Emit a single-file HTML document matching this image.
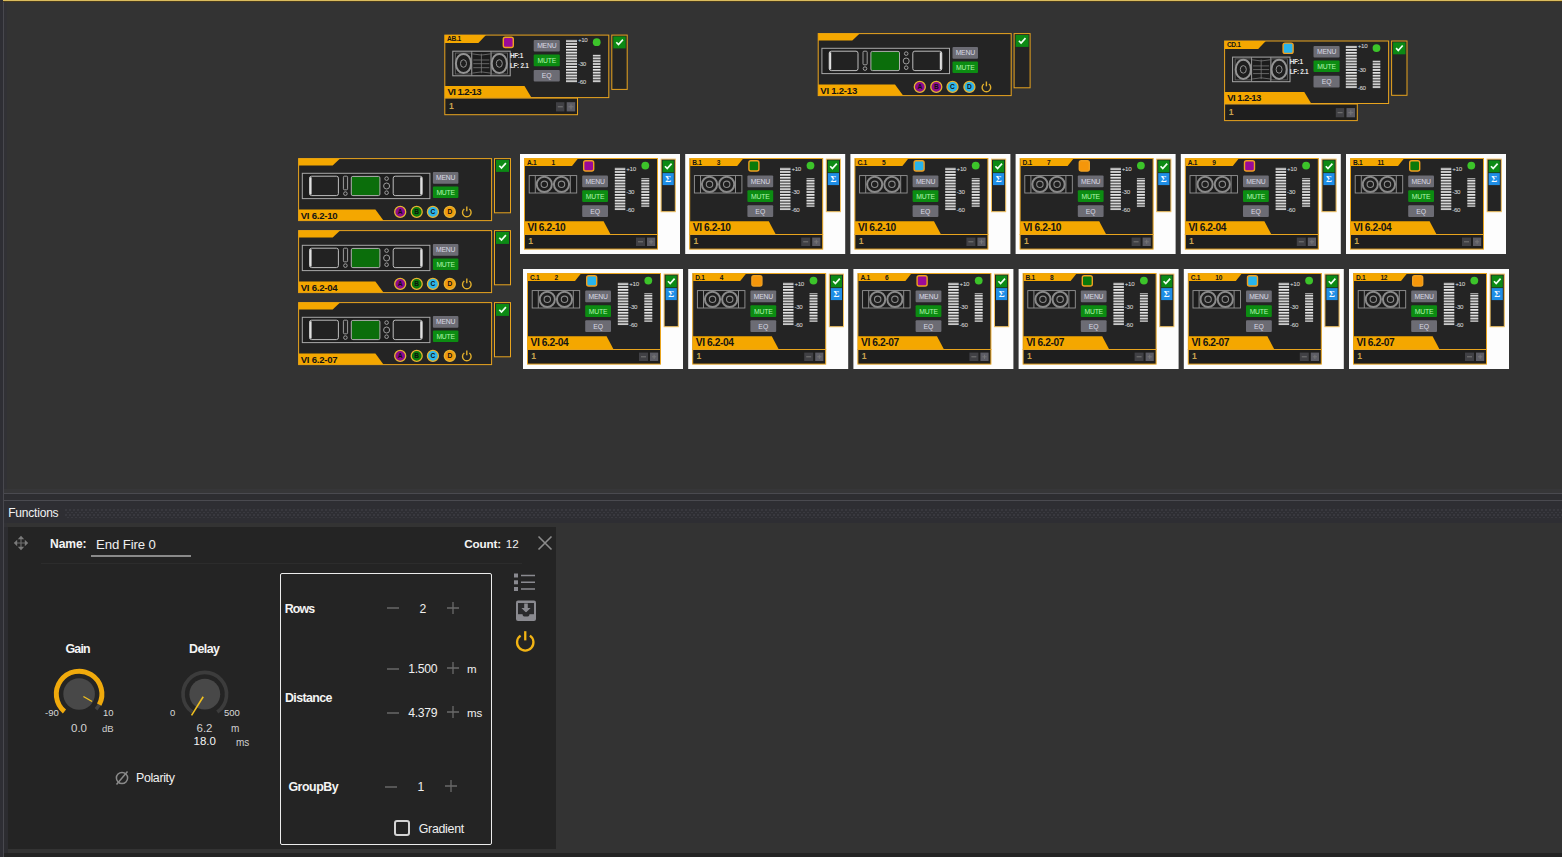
<!DOCTYPE html><html><head><meta charset="utf-8"><style>
*{margin:0;padding:0;box-sizing:border-box}
html,body{width:1562px;height:857px;overflow:hidden;background:#333333;font-family:"Liberation Sans",sans-serif;position:relative}
.a{position:absolute}
.card{position:absolute;background:#242424;border:1px solid #e9a51c}
.tab{position:absolute;background:#f2aa0a;color:#161616;font-weight:bold;white-space:nowrap}
.nm{position:absolute;background:#f2aa0a;color:#141414;font-weight:bold;white-space:nowrap;letter-spacing:-0.2px}
.btn{position:absolute;background:#6c6c74;color:#d8d8e2;font-size:6.5px;text-align:center;border-radius:1px;letter-spacing:-0.2px}
.mute{background:#0c8c12;color:#a8f0a8}
.mtr{position:absolute;background:repeating-linear-gradient(to bottom,#e6e6e6 0,#e6e6e6 1.6px,#2a2a2a 1.6px,#2a2a2a 2.85px)}
.lbl{position:absolute;color:#dcdcdc;font-size:5.5px;white-space:nowrap;letter-spacing:-0.2px}
.dot{position:absolute;background:#3cc42a;border-radius:50%}
.sq{position:absolute;border:1.5px solid #f0a020;border-radius:2px}
.side{position:absolute;background:#242424;border:1px solid #e9a51c}
.chk{position:absolute;background:#0c8a14}
.sig{position:absolute;background:#1e8ee6;color:#fff;font-weight:bold;text-align:center}
.one{position:absolute;background:#1e1e1e;border:1px solid #e9a51c}
.one span{position:absolute;color:#c89640;font-size:7px;font-weight:bold}
.pm{position:absolute;background:#4a4a4e}
.pm2{position:absolute;background:#5e5e66}
.wb{position:absolute;background:#fdfdfd}
.ab{position:absolute;border-radius:50%;font-size:6px;font-weight:bold;text-align:center}
</style></head><body>
<div class="a" style="left:0;top:0;width:3px;height:857px;background:#2e2e34"></div>
<div class="a" style="left:3px;top:0;width:1px;height:857px;background:#48484e"></div>
<div class="a" style="left:4px;top:0;width:3px;height:857px;background:#313135"></div>
<div class="a" style="left:3px;top:0;width:1559px;height:1px;background:#d9bc5e"></div>
<div class="a" style="left:3px;top:1px;width:1559px;height:1px;background:#4a3a1a"></div>
<div class="a" style="left:4px;top:489px;width:1558px;height:4px;background:#363638"></div>
<div class="a" style="left:4px;top:493px;width:1558px;height:8px;background:#2d2d31;border-top:1px solid #4a4a50;border-bottom:1px solid #4a4a50"></div>
<div class="a" style="left:4px;top:501px;width:1558px;height:21.5px;background:#2e2e33"></div>
<div class="a" style="left:65px;top:509px;width:1497px;height:10px;background-image:radial-gradient(circle at 1px 1px,#39393f 0.7px,transparent 1px),radial-gradient(circle at 3px 3.5px,#39393f 0.7px,transparent 1px);background-size:4px 5px"></div>
<div class="a" style="left:8.2px;top:506.59px;font-size:12px;letter-spacing:-0.2px;color:#f2f2f2;line-height:1;white-space:nowrap">Functions</div>
<div class="a" style="left:4px;top:527px;width:4px;height:326px;background:#2c2c30"></div>
<div class="a" style="left:4px;top:527px;width:1558px;height:326px;background:#333333;left:8px"></div>
<div class="a" style="left:4px;top:853px;width:1558px;height:4px;background:#232323"></div>
<div class="a" style="left:8px;top:527px;width:548px;height:322px;background:#242424"></div>
<div class="a" style="left:41px;top:563px;width:481px;height:1px;background:#2c2c2c"></div>
<svg class="a" style="left:13px;top:535px" width="16" height="16"><path d="M8 2.5v11M2.5 8h11" stroke="#6e6e6e" stroke-width="1.1"/><path d="M8 0.8l-3.2 3.4h6.4zM8 15.2l-3.2-3.4h6.4zM0.8 8l3.4-3.2v6.4zM15.2 8l-3.4-3.2v6.4z" fill="#7a7a7a"/></svg>
<div class="a" style="left:50px;top:537.76px;font-size:12.1px;font-weight:bold;letter-spacing:-0.1px;color:#f4f4f4;line-height:1;white-space:nowrap">Name:</div>
<div class="a" style="left:96px;top:537.63px;font-size:13.2px;letter-spacing:-0.1px;color:#f0f0f0;line-height:1;white-space:nowrap">End Fire 0</div>
<div class="a" style="left:91px;top:555px;width:100px;height:2px;background:#8a8a8a"></div>
<div class="a" style="left:464.3px;top:538.00px;font-size:11.7px;font-weight:bold;letter-spacing:-0.15px;color:#f4f4f4;line-height:1;white-space:nowrap">Count:</div>
<div class="a" style="left:505.8px;top:538.00px;font-size:11.7px;letter-spacing:0px;color:#f0f0f0;line-height:1;white-space:nowrap">12</div>
<svg class="a" style="left:537px;top:535px" width="16" height="16"><path d="M1.5 1.5l13 13M14.5 1.5l-13 13" stroke="#8c8c8c" stroke-width="1.6"/></svg>
<div class="a" style="left:65.4px;top:642.50px;font-size:12.4px;font-weight:bold;letter-spacing:-0.75px;color:#f4f4f4;line-height:1;white-space:nowrap">Gain</div>
<div class="a" style="left:189px;top:642.50px;font-size:12.4px;font-weight:bold;letter-spacing:-0.55px;color:#f4f4f4;line-height:1;white-space:nowrap">Delay</div>
<svg class="a" style="left:40px;top:650px" width="220" height="80"><path d="M24.44 61.47A22.8 22.8 0 1 1 56.04 59.26" fill="none" stroke="#424242" stroke-width="3.6"/><path d="M24.44 61.47A22.8 22.8 0 1 1 59.23 54.70" fill="none" stroke="#f0aa0c" stroke-width="5"/><circle cx="39.1" cy="44" r="15.8" fill="#484848"/><path d="M43.43 46.50L52.09 51.50" stroke="#f0c020" stroke-width="1.4"/><path d="M152.30 62.06A21.8 21.8 0 1 1 177.30 62.06" fill="none" stroke="#3c3c3c" stroke-width="3.6"/><circle cx="164.8" cy="44.2" r="15.4" fill="#484848"/><path d="M163.21 46.74L151.55 65.40" stroke="#f0c020" stroke-width="1.6"/></svg>
<div class="a" style="left:45px;top:707px;font-size:9.5px;color:#d8d8d8;line-height:11px">-90</div>
<div class="a" style="left:103px;top:707px;font-size:9.5px;color:#d8d8d8;line-height:11px">10</div>
<div class="a" style="left:71px;top:720.5px;font-size:11.5px;color:#d4d4d4;line-height:14px">0.0</div>
<div class="a" style="left:102px;top:723px;font-size:9.5px;color:#d0d0d0;line-height:11px">dB</div>
<div class="a" style="left:170px;top:707px;font-size:9.5px;color:#d8d8d8;line-height:11px">0</div>
<div class="a" style="left:224px;top:707px;font-size:9.5px;color:#d8d8d8;line-height:11px">500</div>
<div class="a" style="left:196.5px;top:720.5px;font-size:11.5px;color:#d4d4d4;line-height:14px">6.2</div>
<div class="a" style="left:231px;top:723px;font-size:10px;color:#d0d0d0;line-height:11px">m</div>
<div class="a" style="left:193.5px;top:734px;font-size:11.5px;color:#f4f4f4;line-height:14px">18.0</div>
<div class="a" style="left:236px;top:737px;font-size:10px;color:#d0d0d0;line-height:11px">ms</div>
<svg class="a" style="left:114px;top:770px" width="16" height="16"><circle cx="8" cy="8" r="5.6" fill="none" stroke="#8a8a8a" stroke-width="1.5"/><path d="M2.5 14.5l11-13" stroke="#8a8a8a" stroke-width="1.5"/></svg>
<div class="a" style="left:136px;top:772.40px;font-size:12.4px;letter-spacing:-0.35px;color:#f0f0f0;line-height:1;white-space:nowrap">Polarity</div>
<div class="a" style="left:280px;top:573px;width:212px;height:272px;border:1px solid #ececec;border-radius:2px"></div>
<div class="a" style="left:284.8px;top:602.50px;font-size:12.4px;font-weight:bold;letter-spacing:-0.9px;color:#f4f4f4;line-height:1;white-space:nowrap">Rows</div>
<div class="a" style="left:285px;top:692.30px;font-size:12.4px;font-weight:bold;letter-spacing:-0.6px;color:#f4f4f4;line-height:1;white-space:nowrap">Distance</div>
<div class="a" style="left:288.4px;top:781.40px;font-size:12.4px;font-weight:bold;letter-spacing:-0.45px;color:#f4f4f4;line-height:1;white-space:nowrap">GroupBy</div>
<svg class="a" style="left:386px;top:601px" width="14" height="14"><path d="M1 7h12" stroke="#6e6e6e" stroke-width="1.4"/></svg><svg class="a" style="left:446px;top:600.8px" width="14" height="14"><path d="M1 7h12M7 1v12" stroke="#6a6a6a" stroke-width="1.3"/></svg><div class="a" style="left:392.7px;top:601.7px;width:60px;text-align:center;font-size:12.2px;letter-spacing:-0.3px;color:#f0f0f0;line-height:14px">2</div>
<svg class="a" style="left:386px;top:661.5px" width="14" height="14"><path d="M1 7h12" stroke="#6e6e6e" stroke-width="1.4"/></svg><svg class="a" style="left:446px;top:661.3px" width="14" height="14"><path d="M1 7h12M7 1v12" stroke="#6a6a6a" stroke-width="1.3"/></svg><div class="a" style="left:392.7px;top:662.2px;width:60px;text-align:center;font-size:12.2px;letter-spacing:-0.3px;color:#f0f0f0;line-height:14px">1.500</div>
<svg class="a" style="left:386px;top:705.5px" width="14" height="14"><path d="M1 7h12" stroke="#6e6e6e" stroke-width="1.4"/></svg><svg class="a" style="left:446px;top:705.3px" width="14" height="14"><path d="M1 7h12M7 1v12" stroke="#6a6a6a" stroke-width="1.3"/></svg><div class="a" style="left:392.7px;top:706.2px;width:60px;text-align:center;font-size:12.2px;letter-spacing:-0.3px;color:#f0f0f0;line-height:14px">4.379</div>
<svg class="a" style="left:384px;top:779.5px" width="14" height="14"><path d="M1 7h12" stroke="#6e6e6e" stroke-width="1.4"/></svg><svg class="a" style="left:444px;top:779.3px" width="14" height="14"><path d="M1 7h12M7 1v12" stroke="#6a6a6a" stroke-width="1.3"/></svg><div class="a" style="left:390.8px;top:780.2px;width:60px;text-align:center;font-size:12.2px;letter-spacing:-0.3px;color:#f0f0f0;line-height:14px">1</div>
<div class="a" style="left:467px;top:661.5px;font-size:11.5px;color:#f0f0f0;line-height:14px">m</div>
<div class="a" style="left:467px;top:705.5px;font-size:11.5px;color:#f0f0f0;line-height:14px">ms</div>
<div class="a" style="left:394.4px;top:820.1px;width:15.4px;height:15.6px;border:2px solid #d4d4d4;border-radius:3px"></div>
<div class="a" style="left:418.7px;top:822.70px;font-size:12.4px;letter-spacing:-0.28px;color:#f0f0f0;line-height:1;white-space:nowrap">Gradient</div>
<svg class="a" style="left:513px;top:573px" width="24" height="19"><rect x="1" y="0.5" width="4" height="4" fill="#8a8a90"/><rect x="1" y="7.3" width="4" height="4" fill="#8a8a90"/><rect x="1" y="14" width="4" height="4" fill="#8a8a90"/><path d="M8 2.5h14M8 9.3h14M8 16h14" stroke="#8a8a90" stroke-width="1.6"/></svg>
<svg class="a" style="left:515px;top:600px" width="22" height="22"><rect x="1" y="0.5" width="20" height="20.5" rx="2" fill="#8a8a90"/><rect x="3" y="3" width="16" height="11.2" fill="#2a2a2c"/><path d="M9.2 3.5h3.6v4.4h2.8L11 12.6 6.4 7.9h2.8z" fill="#8a8a90"/><ellipse cx="11" cy="14.4" rx="3.4" ry="2.2" fill="#2a2a2c"/></svg>
<svg class="a" style="left:514px;top:630px" width="23" height="23"><path d="M6.6 5.6A8.2 8.2 0 1 0 15.9 5.6" fill="none" stroke="#f2b414" stroke-width="2.3"/><path d="M11.25 1.2v9.2" stroke="#f2b414" stroke-width="2.3"/></svg>
<svg class="a" style="left:0;top:0" width="1562" height="490" font-family="Liberation Sans" >
<defs>
<pattern id="stripe" width="20" height="2.86" patternUnits="userSpaceOnUse"><rect width="20" height="1.7" fill="#e8e8e8"/></pattern>
<symbol id="gspk" width="50" height="20" overflow="visible">
<rect x="0.5" y="1.2" width="47.5" height="17.4" fill="#1c1c1c" stroke="#969696" stroke-width="0.9"/>
<path d="M6.6 1.2v17.4M41.6 1.2v17.4" stroke="#969696" stroke-width="0.9"/>
<circle cx="15.6" cy="9.9" r="7.6" fill="#1e1e1e" stroke="#8a8a8a" stroke-width="2"/>
<circle cx="15.6" cy="9.9" r="3.2" fill="#1e1e1e" stroke="#8a8a8a" stroke-width="1.1"/>
<circle cx="32.8" cy="9.9" r="7.6" fill="#1e1e1e" stroke="#8a8a8a" stroke-width="2"/>
<circle cx="32.8" cy="9.9" r="3.2" fill="#1e1e1e" stroke="#8a8a8a" stroke-width="1.1"/>
</symbol>
<symbol id="aspk" width="60" height="26" overflow="visible">
<rect x="0.5" y="0.5" width="57.4" height="24.6" fill="#1c1c1c" stroke="#a8a8a8" stroke-width="1"/>
<rect x="3" y="2.3" width="16.3" height="21" fill="none" stroke="#6a6a6a" stroke-width="0.8"/>
<rect x="38.9" y="2.3" width="16.3" height="21" fill="none" stroke="#6a6a6a" stroke-width="0.8"/>
<path d="M19.5 0.5v24.6M38.7 0.5v24.6" stroke="#999" stroke-width="0.9"/>
<path d="M20 3.2Q29.1 5.5 38.2 3.2M20 22.4Q29.1 20 38.2 22.4M29.1 3v19.5M21 9.3h16M21 13h16M21 17h16" stroke="#777" stroke-width="0.8" fill="none"/>
<ellipse cx="11.2" cy="12.8" rx="7.6" ry="9.6" fill="#1e1e1e" stroke="#949494" stroke-width="2"/>
<ellipse cx="11.2" cy="12.8" rx="3" ry="3.8" fill="none" stroke="#949494" stroke-width="1"/>
<ellipse cx="47" cy="12.8" rx="7.6" ry="9.6" fill="#1e1e1e" stroke="#949494" stroke-width="2"/>
<ellipse cx="47" cy="12.8" rx="3" ry="3.8" fill="none" stroke="#949494" stroke-width="1"/>
</symbol>
<symbol id="rack" width="130" height="27" overflow="visible">
<rect x="0.5" y="0.5" width="127.6" height="25.3" fill="#1e1e1e" stroke="#a8a8a8" stroke-width="1"/>
<rect x="7.8" y="3.4" width="28.8" height="19.4" rx="2" fill="#222" stroke="#bdbdbd" stroke-width="1"/>
<path d="M8.8 4.5v17.2" stroke="#e0e0e0" stroke-width="2"/>
<rect x="41.6" y="3.4" width="4.2" height="13.6" rx="1" fill="#222" stroke="#aaa" stroke-width="0.9"/>
<circle cx="43.6" cy="20.8" r="1.8" fill="none" stroke="#aaa" stroke-width="0.9"/>
<rect x="49.5" y="3.6" width="28.6" height="19.2" rx="1.5" fill="#0b6e0b" stroke="#b0b0b0" stroke-width="1"/>
<circle cx="84.8" cy="5.8" r="1.8" fill="none" stroke="#aaa" stroke-width="0.9"/>
<circle cx="84.8" cy="13.2" r="3" fill="none" stroke="#aaa" stroke-width="0.9"/>
<circle cx="84.8" cy="19.9" r="1.8" fill="none" stroke="#aaa" stroke-width="0.9"/>
<rect x="91.4" y="3.4" width="29" height="19.4" rx="2" fill="#222" stroke="#bdbdbd" stroke-width="1"/>
<path d="M119.4 4.5v17.2" stroke="#e0e0e0" stroke-width="2"/>
</symbol>
<symbol id="pwr" width="12" height="12" overflow="visible">
<path d="M3.6 3.9A4.3 4.3 0 1 0 8.6 3.9" fill="none" stroke="#e0ae2c" stroke-width="1.4"/>
<path d="M6.1 1.4v4.8" stroke="#e0ae2c" stroke-width="1.4"/>
</symbol>
</defs>
<g transform="translate(444.3,34.6)"><rect x="0.5" y="0.5" width="164" height="62.5" fill="#242424" stroke="#e8a41e"/><polygon points="0.5,0.5 41.7,0.5 34.1,8.4 0.5,8.4" fill="#f4a700"/><text x="2.8" y="6.9" font-size="6.6" fill="#151515" font-weight="bold" letter-spacing="-0.3">AB.1</text><rect x="59" y="2.6" width="10" height="10.3" rx="2" fill="#9a0a9a" stroke="#f0a020" stroke-width="1.4"/><use href="#aspk" x="8" y="16.1"/><text x="65.6" y="23.2" font-size="6.4" fill="#e6e6e6" font-weight="bold" letter-spacing="-0.3">HF:1</text><text x="65.6" y="33.2" font-size="6.4" fill="#e6e6e6" font-weight="bold" letter-spacing="-0.3">LF: 2.1</text><rect x="89.4" y="5.4" width="26.1" height="11.6" rx="1" fill="#6c6c74"/><text x="102.45" y="13.8" font-size="6.8" fill="#dadae4" text-anchor="middle" letter-spacing="-0.2">MENU</text><rect x="89.4" y="20.0" width="26.1" height="11.6" rx="1" fill="#0c8c12"/><text x="102.45" y="28.400000000000002" font-size="6.8" fill="#b0f4b0" text-anchor="middle" letter-spacing="-0.2">MUTE</text><rect x="89.4" y="35.3" width="26.1" height="11.6" rx="1" fill="#6c6c74"/><text x="102.45" y="43.699999999999996" font-size="6.8" fill="#dadae4" text-anchor="middle" >EQ</text><rect x="121.7" y="5.1" width="11" height="43" fill="url(#stripe)"/><rect x="148.6" y="20" width="7.6" height="28.1" fill="url(#stripe)"/><text x="133.6" y="7.4" font-size="6.2" fill="#e0e0e0" letter-spacing="-0.3">+10</text><text x="133.6" y="31.7" font-size="6.2" fill="#e0e0e0" letter-spacing="-0.3">-30</text><text x="133.6" y="49.6" font-size="6.2" fill="#e0e0e0" letter-spacing="-0.3">-60</text><circle cx="152.4" cy="7.6" r="3.9" fill="#3cc42a"/><polygon points="0.5,51.5 80.2,51.5 87.1,63 0.5,63" fill="#f4a700"/><text x="3.2" y="60.4" font-size="9.6" fill="#141414" font-weight="bold" letter-spacing="-0.6">VI 1.2-13</text><rect x="0.5" y="63.5" width="132.7" height="16.6" fill="#1e1e1e" stroke="#e8a41e"/><text x="4.6" y="74" font-size="8.6" fill="#c9a450" font-weight="bold" >1</text><rect x="111.7" y="67.6" width="8.4" height="9.2" fill="#404044"/><rect x="122.4" y="67.6" width="8.5" height="9.2" fill="#5c5c64"/><path d="M113.5 72.2h5M124.2 72.2h5M126.7 69.7v5" stroke="#777" stroke-width="1"/><rect x="167.5" y="0.5" width="15.399999999999999" height="54.3" fill="#242424" stroke="#e8a41e"/><rect x="169" y="1.8" width="12.399999999999999" height="12" fill="#0c8a14"/><path d="M172.0 7.6 L174.2 10 L178.6 5" stroke="#f0fff0" stroke-width="1.7" fill="none"/></g>
<g transform="translate(1224.1,40.5)"><rect x="0.5" y="0.5" width="164" height="62.5" fill="#242424" stroke="#e8a41e"/><polygon points="0.5,0.5 41.7,0.5 34.1,8.4 0.5,8.4" fill="#f4a700"/><text x="2.8" y="6.9" font-size="6.6" fill="#151515" font-weight="bold" letter-spacing="-0.3">CD.1</text><rect x="59" y="2.6" width="10" height="10.3" rx="2" fill="#28b4ec" stroke="#f0a020" stroke-width="1.4"/><use href="#aspk" x="8" y="16.1"/><text x="65.6" y="23.2" font-size="6.4" fill="#e6e6e6" font-weight="bold" letter-spacing="-0.3">HF:1</text><text x="65.6" y="33.2" font-size="6.4" fill="#e6e6e6" font-weight="bold" letter-spacing="-0.3">LF: 2.1</text><rect x="89.4" y="5.4" width="26.1" height="11.6" rx="1" fill="#6c6c74"/><text x="102.45" y="13.8" font-size="6.8" fill="#dadae4" text-anchor="middle" letter-spacing="-0.2">MENU</text><rect x="89.4" y="20.0" width="26.1" height="11.6" rx="1" fill="#0c8c12"/><text x="102.45" y="28.400000000000002" font-size="6.8" fill="#b0f4b0" text-anchor="middle" letter-spacing="-0.2">MUTE</text><rect x="89.4" y="35.3" width="26.1" height="11.6" rx="1" fill="#6c6c74"/><text x="102.45" y="43.699999999999996" font-size="6.8" fill="#dadae4" text-anchor="middle" >EQ</text><rect x="121.7" y="5.1" width="11" height="43" fill="url(#stripe)"/><rect x="148.6" y="20" width="7.6" height="28.1" fill="url(#stripe)"/><text x="133.6" y="7.4" font-size="6.2" fill="#e0e0e0" letter-spacing="-0.3">+10</text><text x="133.6" y="31.7" font-size="6.2" fill="#e0e0e0" letter-spacing="-0.3">-30</text><text x="133.6" y="49.6" font-size="6.2" fill="#e0e0e0" letter-spacing="-0.3">-60</text><circle cx="152.4" cy="7.6" r="3.9" fill="#3cc42a"/><polygon points="0.5,51.5 80.2,51.5 87.1,63 0.5,63" fill="#f4a700"/><text x="3.2" y="60.4" font-size="9.6" fill="#141414" font-weight="bold" letter-spacing="-0.6">VI 1.2-13</text><rect x="0.5" y="63.5" width="132.7" height="16.6" fill="#1e1e1e" stroke="#e8a41e"/><text x="4.6" y="74" font-size="8.6" fill="#c9a450" font-weight="bold" >1</text><rect x="111.7" y="67.6" width="8.4" height="9.2" fill="#404044"/><rect x="122.4" y="67.6" width="8.5" height="9.2" fill="#5c5c64"/><path d="M113.5 72.2h5M124.2 72.2h5M126.7 69.7v5" stroke="#777" stroke-width="1"/><rect x="167.5" y="0.5" width="15.399999999999999" height="54.3" fill="#242424" stroke="#e8a41e"/><rect x="169" y="1.8" width="12.399999999999999" height="12" fill="#0c8a14"/><path d="M172.0 7.6 L174.2 10 L178.6 5" stroke="#f0fff0" stroke-width="1.7" fill="none"/></g>
<g transform="translate(817.7,33.1)"><rect x="0.5" y="0.5" width="193" height="62" fill="#242424" stroke="#e8a41e"/><polygon points="0.5,0.5 42,0.5 34.6,7.4 0.5,7.4" fill="#f4a700"/><use href="#rack" x="3.7" y="14.7"/><rect x="134.8" y="14" width="25.5" height="11.6" rx="1" fill="#6c6c74"/><text x="147.55" y="22.400000000000002" font-size="6.8" fill="#dadae4" text-anchor="middle" letter-spacing="-0.2">MENU</text><rect x="134.8" y="28.4" width="25.5" height="11.6" rx="1" fill="#0c8c12"/><text x="147.55" y="36.8" font-size="6.8" fill="#b0f4b0" text-anchor="middle" letter-spacing="-0.2">MUTE</text><circle cx="102.1" cy="53.8" r="5.5" fill="#8c0a8c" stroke="#e6b432" stroke-width="1.3"/><text x="102.1" y="56.2" font-size="6.6" fill="#101010" font-weight="bold" text-anchor="middle" >A</text><circle cx="118.6" cy="53.8" r="5.5" fill="#8c0a8c" stroke="#e6b432" stroke-width="1.3"/><text x="118.6" y="56.2" font-size="6.6" fill="#101010" font-weight="bold" text-anchor="middle" >B</text><circle cx="134.8" cy="53.8" r="5.5" fill="#2cb6ea" stroke="#e6b432" stroke-width="1.3"/><text x="134.8" y="56.2" font-size="6.6" fill="#101010" font-weight="bold" text-anchor="middle" >C</text><circle cx="151.7" cy="53.8" r="5.5" fill="#2cb6ea" stroke="#e6b432" stroke-width="1.3"/><text x="151.7" y="56.2" font-size="6.6" fill="#101010" font-weight="bold" text-anchor="middle" >D</text><use href="#pwr" x="162.6" y="47"/><polygon points="0.5,51.5 77.3,51.5 85.4,62.5 0.5,62.5" fill="#f4a700"/><text x="2.6" y="60.7" font-size="9.6" fill="#141414" font-weight="bold" letter-spacing="-0.25">VI 1.2-13</text><rect x="196.4" y="0.5" width="16" height="54.2" fill="#242424" stroke="#e8a41e"/><rect x="197.9" y="1.8" width="13" height="12" fill="#0c8a14"/><path d="M201.20000000000002 7.6 L203.4 10 L207.8 5" stroke="#f0fff0" stroke-width="1.7" fill="none"/></g>
<g transform="translate(298.1,158.1)"><rect x="0.5" y="0.5" width="193" height="62" fill="#242424" stroke="#e8a41e"/><polygon points="0.5,0.5 42,0.5 34.6,7.4 0.5,7.4" fill="#f4a700"/><use href="#rack" x="3.7" y="14.7"/><rect x="134.8" y="14" width="25.5" height="11.6" rx="1" fill="#6c6c74"/><text x="147.55" y="22.400000000000002" font-size="6.8" fill="#dadae4" text-anchor="middle" letter-spacing="-0.2">MENU</text><rect x="134.8" y="28.4" width="25.5" height="11.6" rx="1" fill="#0c8c12"/><text x="147.55" y="36.8" font-size="6.8" fill="#b0f4b0" text-anchor="middle" letter-spacing="-0.2">MUTE</text><circle cx="102.1" cy="53.8" r="5.5" fill="#8c0a8c" stroke="#e6b432" stroke-width="1.3"/><text x="102.1" y="56.2" font-size="6.6" fill="#101010" font-weight="bold" text-anchor="middle" >A</text><circle cx="118.6" cy="53.8" r="5.5" fill="#0a780a" stroke="#e6b432" stroke-width="1.3"/><text x="118.6" y="56.2" font-size="6.6" fill="#101010" font-weight="bold" text-anchor="middle" >B</text><circle cx="134.8" cy="53.8" r="5.5" fill="#2cb6ea" stroke="#e6b432" stroke-width="1.3"/><text x="134.8" y="56.2" font-size="6.6" fill="#101010" font-weight="bold" text-anchor="middle" >C</text><circle cx="151.7" cy="53.8" r="5.5" fill="#f29a0c" stroke="#e6b432" stroke-width="1.3"/><text x="151.7" y="56.2" font-size="6.6" fill="#101010" font-weight="bold" text-anchor="middle" >D</text><use href="#pwr" x="162.6" y="47"/><polygon points="0.5,51.5 77.3,51.5 85.4,62.5 0.5,62.5" fill="#f4a700"/><text x="2.6" y="60.7" font-size="9.6" fill="#141414" font-weight="bold" letter-spacing="-0.25">VI 6.2-10</text><rect x="196.4" y="0.5" width="16" height="54.2" fill="#242424" stroke="#e8a41e"/><rect x="197.9" y="1.8" width="13" height="12" fill="#0c8a14"/><path d="M201.20000000000002 7.6 L203.4 10 L207.8 5" stroke="#f0fff0" stroke-width="1.7" fill="none"/></g>
<g transform="translate(298.1,230.1)"><rect x="0.5" y="0.5" width="193" height="62" fill="#242424" stroke="#e8a41e"/><polygon points="0.5,0.5 42,0.5 34.6,7.4 0.5,7.4" fill="#f4a700"/><use href="#rack" x="3.7" y="14.7"/><rect x="134.8" y="14" width="25.5" height="11.6" rx="1" fill="#6c6c74"/><text x="147.55" y="22.400000000000002" font-size="6.8" fill="#dadae4" text-anchor="middle" letter-spacing="-0.2">MENU</text><rect x="134.8" y="28.4" width="25.5" height="11.6" rx="1" fill="#0c8c12"/><text x="147.55" y="36.8" font-size="6.8" fill="#b0f4b0" text-anchor="middle" letter-spacing="-0.2">MUTE</text><circle cx="102.1" cy="53.8" r="5.5" fill="#8c0a8c" stroke="#e6b432" stroke-width="1.3"/><text x="102.1" y="56.2" font-size="6.6" fill="#101010" font-weight="bold" text-anchor="middle" >A</text><circle cx="118.6" cy="53.8" r="5.5" fill="#0a780a" stroke="#e6b432" stroke-width="1.3"/><text x="118.6" y="56.2" font-size="6.6" fill="#101010" font-weight="bold" text-anchor="middle" >B</text><circle cx="134.8" cy="53.8" r="5.5" fill="#2cb6ea" stroke="#e6b432" stroke-width="1.3"/><text x="134.8" y="56.2" font-size="6.6" fill="#101010" font-weight="bold" text-anchor="middle" >C</text><circle cx="151.7" cy="53.8" r="5.5" fill="#f29a0c" stroke="#e6b432" stroke-width="1.3"/><text x="151.7" y="56.2" font-size="6.6" fill="#101010" font-weight="bold" text-anchor="middle" >D</text><use href="#pwr" x="162.6" y="47"/><polygon points="0.5,51.5 77.3,51.5 85.4,62.5 0.5,62.5" fill="#f4a700"/><text x="2.6" y="60.7" font-size="9.6" fill="#141414" font-weight="bold" letter-spacing="-0.25">VI 6.2-04</text><rect x="196.4" y="0.5" width="16" height="54.2" fill="#242424" stroke="#e8a41e"/><rect x="197.9" y="1.8" width="13" height="12" fill="#0c8a14"/><path d="M201.20000000000002 7.6 L203.4 10 L207.8 5" stroke="#f0fff0" stroke-width="1.7" fill="none"/></g>
<g transform="translate(298.1,302.1)"><rect x="0.5" y="0.5" width="193" height="62" fill="#242424" stroke="#e8a41e"/><polygon points="0.5,0.5 42,0.5 34.6,7.4 0.5,7.4" fill="#f4a700"/><use href="#rack" x="3.7" y="14.7"/><rect x="134.8" y="14" width="25.5" height="11.6" rx="1" fill="#6c6c74"/><text x="147.55" y="22.400000000000002" font-size="6.8" fill="#dadae4" text-anchor="middle" letter-spacing="-0.2">MENU</text><rect x="134.8" y="28.4" width="25.5" height="11.6" rx="1" fill="#0c8c12"/><text x="147.55" y="36.8" font-size="6.8" fill="#b0f4b0" text-anchor="middle" letter-spacing="-0.2">MUTE</text><circle cx="102.1" cy="53.8" r="5.5" fill="#8c0a8c" stroke="#e6b432" stroke-width="1.3"/><text x="102.1" y="56.2" font-size="6.6" fill="#101010" font-weight="bold" text-anchor="middle" >A</text><circle cx="118.6" cy="53.8" r="5.5" fill="#0a780a" stroke="#e6b432" stroke-width="1.3"/><text x="118.6" y="56.2" font-size="6.6" fill="#101010" font-weight="bold" text-anchor="middle" >B</text><circle cx="134.8" cy="53.8" r="5.5" fill="#2cb6ea" stroke="#e6b432" stroke-width="1.3"/><text x="134.8" y="56.2" font-size="6.6" fill="#101010" font-weight="bold" text-anchor="middle" >C</text><circle cx="151.7" cy="53.8" r="5.5" fill="#f29a0c" stroke="#e6b432" stroke-width="1.3"/><text x="151.7" y="56.2" font-size="6.6" fill="#101010" font-weight="bold" text-anchor="middle" >D</text><use href="#pwr" x="162.6" y="47"/><polygon points="0.5,51.5 77.3,51.5 85.4,62.5 0.5,62.5" fill="#f4a700"/><text x="2.6" y="60.7" font-size="9.6" fill="#141414" font-weight="bold" letter-spacing="-0.25">VI 6.2-07</text><rect x="196.4" y="0.5" width="16" height="54.2" fill="#242424" stroke="#e8a41e"/><rect x="197.9" y="1.8" width="13" height="12" fill="#0c8a14"/><path d="M201.20000000000002 7.6 L203.4 10 L207.8 5" stroke="#f0fff0" stroke-width="1.7" fill="none"/></g>
<g transform="translate(520.0,154)"><rect x="0" y="0" width="160" height="100" fill="#fdfdfd"/><rect x="4.5" y="4.5" width="133" height="76" fill="#242424" stroke="#e8a41e"/><polygon points="5,4.5 58,4.5 52,12 5,12" fill="#f4a700"/><text x="7" y="10.8" font-size="6.6" fill="#151515" font-weight="bold" letter-spacing="-0.3">A.1</text><text x="31.5" y="10.8" font-size="6.6" fill="#151515" font-weight="bold" letter-spacing="-0.3">1</text><rect x="63.7" y="6.7" width="10" height="10.3" rx="2" fill="#9a0a9a" stroke="#f0a020" stroke-width="1.4"/><use href="#gspk" x="8.7" y="20.4"/><rect x="62.2" y="21.5" width="25.8" height="11.7" rx="1" fill="#6c6c74"/><text x="75.10000000000001" y="30.000000000000004" font-size="6.8" fill="#dadae4" text-anchor="middle" letter-spacing="-0.2">MENU</text><rect x="62.2" y="36.2" width="25.8" height="11.7" rx="1" fill="#0c8c12"/><text x="75.10000000000001" y="44.7" font-size="6.8" fill="#b0f4b0" text-anchor="middle" letter-spacing="-0.2">MUTE</text><rect x="62.2" y="51.2" width="25.8" height="11.7" rx="1" fill="#6c6c74"/><text x="75.10000000000001" y="59.7" font-size="6.8" fill="#dadae4" text-anchor="middle" >EQ</text><rect x="94.8" y="13.4" width="10.5" height="42.8" fill="url(#stripe)"/><rect x="121.3" y="24" width="8" height="28.8" fill="url(#stripe)"/><text x="106.2" y="16.6" font-size="6.2" fill="#e0e0e0" letter-spacing="-0.3">+10</text><text x="106.2" y="40.0" font-size="6.2" fill="#e0e0e0" letter-spacing="-0.3">-30</text><text x="106.2" y="58.3" font-size="6.2" fill="#e0e0e0" letter-spacing="-0.3">-60</text><circle cx="125.3" cy="11.6" r="3.9" fill="#3cc42a"/><polygon points="4.5,67.3 83.6,67.3 90.6,80.5 4.5,80.5" fill="#f4a700"/><text x="7.6" y="76.8" font-size="10.2" fill="#141414" font-weight="bold" letter-spacing="-0.4">VI 6.2-10</text><rect x="4.5" y="80.5" width="133" height="14.6" fill="#1e1e1e" stroke="#e8a41e"/><text x="8.3" y="90.2" font-size="8.6" fill="#c9a450" font-weight="bold" >1</text><rect x="116" y="83.6" width="9" height="8.4" fill="#404044"/><rect x="127" y="83.6" width="8.2" height="8.4" fill="#5c5c64"/><path d="M118 87.8h5M129 87.8h4.2M131.1 85.7v4.2" stroke="#777" stroke-width="1"/><rect x="141.1" y="5.1" width="14.2" height="52.6" fill="#242424" stroke="#f2c260"/><rect x="142.6" y="6.3999999999999995" width="11.2" height="12" fill="#0c8a14"/><path d="M145.0 12.2 L147.2 14.6 L151.6 9.6" stroke="#f0fff0" stroke-width="1.7" fill="none"/><rect x="142.6" y="19.1" width="11.2" height="12" fill="#1e8ee6"/><text x="148.2" y="28.4" font-size="9" fill="#f4fbff" font-weight="bold" text-anchor="middle" font-family="Liberation Serif">&#931;</text></g>
<g transform="translate(685.2,154)"><rect x="0" y="0" width="160" height="100" fill="#fdfdfd"/><rect x="4.5" y="4.5" width="133" height="76" fill="#242424" stroke="#e8a41e"/><polygon points="5,4.5 58,4.5 52,12 5,12" fill="#f4a700"/><text x="7" y="10.8" font-size="6.6" fill="#151515" font-weight="bold" letter-spacing="-0.3">B.1</text><text x="31.5" y="10.8" font-size="6.6" fill="#151515" font-weight="bold" letter-spacing="-0.3">3</text><rect x="63.7" y="6.7" width="10" height="10.3" rx="2" fill="#0a7a0a" stroke="#f0a020" stroke-width="1.4"/><use href="#gspk" x="8.7" y="20.4"/><rect x="62.2" y="21.5" width="25.8" height="11.7" rx="1" fill="#6c6c74"/><text x="75.10000000000001" y="30.000000000000004" font-size="6.8" fill="#dadae4" text-anchor="middle" letter-spacing="-0.2">MENU</text><rect x="62.2" y="36.2" width="25.8" height="11.7" rx="1" fill="#0c8c12"/><text x="75.10000000000001" y="44.7" font-size="6.8" fill="#b0f4b0" text-anchor="middle" letter-spacing="-0.2">MUTE</text><rect x="62.2" y="51.2" width="25.8" height="11.7" rx="1" fill="#6c6c74"/><text x="75.10000000000001" y="59.7" font-size="6.8" fill="#dadae4" text-anchor="middle" >EQ</text><rect x="94.8" y="13.4" width="10.5" height="42.8" fill="url(#stripe)"/><rect x="121.3" y="24" width="8" height="28.8" fill="url(#stripe)"/><text x="106.2" y="16.6" font-size="6.2" fill="#e0e0e0" letter-spacing="-0.3">+10</text><text x="106.2" y="40.0" font-size="6.2" fill="#e0e0e0" letter-spacing="-0.3">-30</text><text x="106.2" y="58.3" font-size="6.2" fill="#e0e0e0" letter-spacing="-0.3">-60</text><circle cx="125.3" cy="11.6" r="3.9" fill="#3cc42a"/><polygon points="4.5,67.3 83.6,67.3 90.6,80.5 4.5,80.5" fill="#f4a700"/><text x="7.6" y="76.8" font-size="10.2" fill="#141414" font-weight="bold" letter-spacing="-0.4">VI 6.2-10</text><rect x="4.5" y="80.5" width="133" height="14.6" fill="#1e1e1e" stroke="#e8a41e"/><text x="8.3" y="90.2" font-size="8.6" fill="#c9a450" font-weight="bold" >1</text><rect x="116" y="83.6" width="9" height="8.4" fill="#404044"/><rect x="127" y="83.6" width="8.2" height="8.4" fill="#5c5c64"/><path d="M118 87.8h5M129 87.8h4.2M131.1 85.7v4.2" stroke="#777" stroke-width="1"/><rect x="141.1" y="5.1" width="14.2" height="52.6" fill="#242424" stroke="#f2c260"/><rect x="142.6" y="6.3999999999999995" width="11.2" height="12" fill="#0c8a14"/><path d="M145.0 12.2 L147.2 14.6 L151.6 9.6" stroke="#f0fff0" stroke-width="1.7" fill="none"/><rect x="142.6" y="19.1" width="11.2" height="12" fill="#1e8ee6"/><text x="148.2" y="28.4" font-size="9" fill="#f4fbff" font-weight="bold" text-anchor="middle" font-family="Liberation Serif">&#931;</text></g>
<g transform="translate(850.4,154)"><rect x="0" y="0" width="160" height="100" fill="#fdfdfd"/><rect x="4.5" y="4.5" width="133" height="76" fill="#242424" stroke="#e8a41e"/><polygon points="5,4.5 58,4.5 52,12 5,12" fill="#f4a700"/><text x="7" y="10.8" font-size="6.6" fill="#151515" font-weight="bold" letter-spacing="-0.3">C.1</text><text x="31.5" y="10.8" font-size="6.6" fill="#151515" font-weight="bold" letter-spacing="-0.3">5</text><rect x="63.7" y="6.7" width="10" height="10.3" rx="2" fill="#28b4ec" stroke="#f0a020" stroke-width="1.4"/><use href="#gspk" x="8.7" y="20.4"/><rect x="62.2" y="21.5" width="25.8" height="11.7" rx="1" fill="#6c6c74"/><text x="75.10000000000001" y="30.000000000000004" font-size="6.8" fill="#dadae4" text-anchor="middle" letter-spacing="-0.2">MENU</text><rect x="62.2" y="36.2" width="25.8" height="11.7" rx="1" fill="#0c8c12"/><text x="75.10000000000001" y="44.7" font-size="6.8" fill="#b0f4b0" text-anchor="middle" letter-spacing="-0.2">MUTE</text><rect x="62.2" y="51.2" width="25.8" height="11.7" rx="1" fill="#6c6c74"/><text x="75.10000000000001" y="59.7" font-size="6.8" fill="#dadae4" text-anchor="middle" >EQ</text><rect x="94.8" y="13.4" width="10.5" height="42.8" fill="url(#stripe)"/><rect x="121.3" y="24" width="8" height="28.8" fill="url(#stripe)"/><text x="106.2" y="16.6" font-size="6.2" fill="#e0e0e0" letter-spacing="-0.3">+10</text><text x="106.2" y="40.0" font-size="6.2" fill="#e0e0e0" letter-spacing="-0.3">-30</text><text x="106.2" y="58.3" font-size="6.2" fill="#e0e0e0" letter-spacing="-0.3">-60</text><circle cx="125.3" cy="11.6" r="3.9" fill="#3cc42a"/><polygon points="4.5,67.3 83.6,67.3 90.6,80.5 4.5,80.5" fill="#f4a700"/><text x="7.6" y="76.8" font-size="10.2" fill="#141414" font-weight="bold" letter-spacing="-0.4">VI 6.2-10</text><rect x="4.5" y="80.5" width="133" height="14.6" fill="#1e1e1e" stroke="#e8a41e"/><text x="8.3" y="90.2" font-size="8.6" fill="#c9a450" font-weight="bold" >1</text><rect x="116" y="83.6" width="9" height="8.4" fill="#404044"/><rect x="127" y="83.6" width="8.2" height="8.4" fill="#5c5c64"/><path d="M118 87.8h5M129 87.8h4.2M131.1 85.7v4.2" stroke="#777" stroke-width="1"/><rect x="141.1" y="5.1" width="14.2" height="52.6" fill="#242424" stroke="#f2c260"/><rect x="142.6" y="6.3999999999999995" width="11.2" height="12" fill="#0c8a14"/><path d="M145.0 12.2 L147.2 14.6 L151.6 9.6" stroke="#f0fff0" stroke-width="1.7" fill="none"/><rect x="142.6" y="19.1" width="11.2" height="12" fill="#1e8ee6"/><text x="148.2" y="28.4" font-size="9" fill="#f4fbff" font-weight="bold" text-anchor="middle" font-family="Liberation Serif">&#931;</text></g>
<g transform="translate(1015.6,154)"><rect x="0" y="0" width="160" height="100" fill="#fdfdfd"/><rect x="4.5" y="4.5" width="133" height="76" fill="#242424" stroke="#e8a41e"/><polygon points="5,4.5 58,4.5 52,12 5,12" fill="#f4a700"/><text x="7" y="10.8" font-size="6.6" fill="#151515" font-weight="bold" letter-spacing="-0.3">D.1</text><text x="31.5" y="10.8" font-size="6.6" fill="#151515" font-weight="bold" letter-spacing="-0.3">7</text><rect x="63.7" y="6.7" width="10" height="10.3" rx="2" fill="#f5960a" stroke="#f0a020" stroke-width="1.4"/><use href="#gspk" x="8.7" y="20.4"/><rect x="62.2" y="21.5" width="25.8" height="11.7" rx="1" fill="#6c6c74"/><text x="75.10000000000001" y="30.000000000000004" font-size="6.8" fill="#dadae4" text-anchor="middle" letter-spacing="-0.2">MENU</text><rect x="62.2" y="36.2" width="25.8" height="11.7" rx="1" fill="#0c8c12"/><text x="75.10000000000001" y="44.7" font-size="6.8" fill="#b0f4b0" text-anchor="middle" letter-spacing="-0.2">MUTE</text><rect x="62.2" y="51.2" width="25.8" height="11.7" rx="1" fill="#6c6c74"/><text x="75.10000000000001" y="59.7" font-size="6.8" fill="#dadae4" text-anchor="middle" >EQ</text><rect x="94.8" y="13.4" width="10.5" height="42.8" fill="url(#stripe)"/><rect x="121.3" y="24" width="8" height="28.8" fill="url(#stripe)"/><text x="106.2" y="16.6" font-size="6.2" fill="#e0e0e0" letter-spacing="-0.3">+10</text><text x="106.2" y="40.0" font-size="6.2" fill="#e0e0e0" letter-spacing="-0.3">-30</text><text x="106.2" y="58.3" font-size="6.2" fill="#e0e0e0" letter-spacing="-0.3">-60</text><circle cx="125.3" cy="11.6" r="3.9" fill="#3cc42a"/><polygon points="4.5,67.3 83.6,67.3 90.6,80.5 4.5,80.5" fill="#f4a700"/><text x="7.6" y="76.8" font-size="10.2" fill="#141414" font-weight="bold" letter-spacing="-0.4">VI 6.2-10</text><rect x="4.5" y="80.5" width="133" height="14.6" fill="#1e1e1e" stroke="#e8a41e"/><text x="8.3" y="90.2" font-size="8.6" fill="#c9a450" font-weight="bold" >1</text><rect x="116" y="83.6" width="9" height="8.4" fill="#404044"/><rect x="127" y="83.6" width="8.2" height="8.4" fill="#5c5c64"/><path d="M118 87.8h5M129 87.8h4.2M131.1 85.7v4.2" stroke="#777" stroke-width="1"/><rect x="141.1" y="5.1" width="14.2" height="52.6" fill="#242424" stroke="#f2c260"/><rect x="142.6" y="6.3999999999999995" width="11.2" height="12" fill="#0c8a14"/><path d="M145.0 12.2 L147.2 14.6 L151.6 9.6" stroke="#f0fff0" stroke-width="1.7" fill="none"/><rect x="142.6" y="19.1" width="11.2" height="12" fill="#1e8ee6"/><text x="148.2" y="28.4" font-size="9" fill="#f4fbff" font-weight="bold" text-anchor="middle" font-family="Liberation Serif">&#931;</text></g>
<g transform="translate(1180.8,154)"><rect x="0" y="0" width="160" height="100" fill="#fdfdfd"/><rect x="4.5" y="4.5" width="133" height="76" fill="#242424" stroke="#e8a41e"/><polygon points="5,4.5 58,4.5 52,12 5,12" fill="#f4a700"/><text x="7" y="10.8" font-size="6.6" fill="#151515" font-weight="bold" letter-spacing="-0.3">A.1</text><text x="31.5" y="10.8" font-size="6.6" fill="#151515" font-weight="bold" letter-spacing="-0.3">9</text><rect x="63.7" y="6.7" width="10" height="10.3" rx="2" fill="#9a0a9a" stroke="#f0a020" stroke-width="1.4"/><use href="#gspk" x="8.7" y="20.4"/><rect x="62.2" y="21.5" width="25.8" height="11.7" rx="1" fill="#6c6c74"/><text x="75.10000000000001" y="30.000000000000004" font-size="6.8" fill="#dadae4" text-anchor="middle" letter-spacing="-0.2">MENU</text><rect x="62.2" y="36.2" width="25.8" height="11.7" rx="1" fill="#0c8c12"/><text x="75.10000000000001" y="44.7" font-size="6.8" fill="#b0f4b0" text-anchor="middle" letter-spacing="-0.2">MUTE</text><rect x="62.2" y="51.2" width="25.8" height="11.7" rx="1" fill="#6c6c74"/><text x="75.10000000000001" y="59.7" font-size="6.8" fill="#dadae4" text-anchor="middle" >EQ</text><rect x="94.8" y="13.4" width="10.5" height="42.8" fill="url(#stripe)"/><rect x="121.3" y="24" width="8" height="28.8" fill="url(#stripe)"/><text x="106.2" y="16.6" font-size="6.2" fill="#e0e0e0" letter-spacing="-0.3">+10</text><text x="106.2" y="40.0" font-size="6.2" fill="#e0e0e0" letter-spacing="-0.3">-30</text><text x="106.2" y="58.3" font-size="6.2" fill="#e0e0e0" letter-spacing="-0.3">-60</text><circle cx="125.3" cy="11.6" r="3.9" fill="#3cc42a"/><polygon points="4.5,67.3 83.6,67.3 90.6,80.5 4.5,80.5" fill="#f4a700"/><text x="7.6" y="76.8" font-size="10.2" fill="#141414" font-weight="bold" letter-spacing="-0.4">VI 6.2-04</text><rect x="4.5" y="80.5" width="133" height="14.6" fill="#1e1e1e" stroke="#e8a41e"/><text x="8.3" y="90.2" font-size="8.6" fill="#c9a450" font-weight="bold" >1</text><rect x="116" y="83.6" width="9" height="8.4" fill="#404044"/><rect x="127" y="83.6" width="8.2" height="8.4" fill="#5c5c64"/><path d="M118 87.8h5M129 87.8h4.2M131.1 85.7v4.2" stroke="#777" stroke-width="1"/><rect x="141.1" y="5.1" width="14.2" height="52.6" fill="#242424" stroke="#f2c260"/><rect x="142.6" y="6.3999999999999995" width="11.2" height="12" fill="#0c8a14"/><path d="M145.0 12.2 L147.2 14.6 L151.6 9.6" stroke="#f0fff0" stroke-width="1.7" fill="none"/><rect x="142.6" y="19.1" width="11.2" height="12" fill="#1e8ee6"/><text x="148.2" y="28.4" font-size="9" fill="#f4fbff" font-weight="bold" text-anchor="middle" font-family="Liberation Serif">&#931;</text></g>
<g transform="translate(1346.0,154)"><rect x="0" y="0" width="160" height="100" fill="#fdfdfd"/><rect x="4.5" y="4.5" width="133" height="76" fill="#242424" stroke="#e8a41e"/><polygon points="5,4.5 58,4.5 52,12 5,12" fill="#f4a700"/><text x="7" y="10.8" font-size="6.6" fill="#151515" font-weight="bold" letter-spacing="-0.3">B.1</text><text x="31.5" y="10.8" font-size="6.6" fill="#151515" font-weight="bold" letter-spacing="-0.3">11</text><rect x="63.7" y="6.7" width="10" height="10.3" rx="2" fill="#0a7a0a" stroke="#f0a020" stroke-width="1.4"/><use href="#gspk" x="8.7" y="20.4"/><rect x="62.2" y="21.5" width="25.8" height="11.7" rx="1" fill="#6c6c74"/><text x="75.10000000000001" y="30.000000000000004" font-size="6.8" fill="#dadae4" text-anchor="middle" letter-spacing="-0.2">MENU</text><rect x="62.2" y="36.2" width="25.8" height="11.7" rx="1" fill="#0c8c12"/><text x="75.10000000000001" y="44.7" font-size="6.8" fill="#b0f4b0" text-anchor="middle" letter-spacing="-0.2">MUTE</text><rect x="62.2" y="51.2" width="25.8" height="11.7" rx="1" fill="#6c6c74"/><text x="75.10000000000001" y="59.7" font-size="6.8" fill="#dadae4" text-anchor="middle" >EQ</text><rect x="94.8" y="13.4" width="10.5" height="42.8" fill="url(#stripe)"/><rect x="121.3" y="24" width="8" height="28.8" fill="url(#stripe)"/><text x="106.2" y="16.6" font-size="6.2" fill="#e0e0e0" letter-spacing="-0.3">+10</text><text x="106.2" y="40.0" font-size="6.2" fill="#e0e0e0" letter-spacing="-0.3">-30</text><text x="106.2" y="58.3" font-size="6.2" fill="#e0e0e0" letter-spacing="-0.3">-60</text><circle cx="125.3" cy="11.6" r="3.9" fill="#3cc42a"/><polygon points="4.5,67.3 83.6,67.3 90.6,80.5 4.5,80.5" fill="#f4a700"/><text x="7.6" y="76.8" font-size="10.2" fill="#141414" font-weight="bold" letter-spacing="-0.4">VI 6.2-04</text><rect x="4.5" y="80.5" width="133" height="14.6" fill="#1e1e1e" stroke="#e8a41e"/><text x="8.3" y="90.2" font-size="8.6" fill="#c9a450" font-weight="bold" >1</text><rect x="116" y="83.6" width="9" height="8.4" fill="#404044"/><rect x="127" y="83.6" width="8.2" height="8.4" fill="#5c5c64"/><path d="M118 87.8h5M129 87.8h4.2M131.1 85.7v4.2" stroke="#777" stroke-width="1"/><rect x="141.1" y="5.1" width="14.2" height="52.6" fill="#242424" stroke="#f2c260"/><rect x="142.6" y="6.3999999999999995" width="11.2" height="12" fill="#0c8a14"/><path d="M145.0 12.2 L147.2 14.6 L151.6 9.6" stroke="#f0fff0" stroke-width="1.7" fill="none"/><rect x="142.6" y="19.1" width="11.2" height="12" fill="#1e8ee6"/><text x="148.2" y="28.4" font-size="9" fill="#f4fbff" font-weight="bold" text-anchor="middle" font-family="Liberation Serif">&#931;</text></g>
<g transform="translate(523.0,269)"><rect x="0" y="0" width="160" height="100" fill="#fdfdfd"/><rect x="4.5" y="4.5" width="133" height="76" fill="#242424" stroke="#e8a41e"/><polygon points="5,4.5 58,4.5 52,12 5,12" fill="#f4a700"/><text x="7" y="10.8" font-size="6.6" fill="#151515" font-weight="bold" letter-spacing="-0.3">C.1</text><text x="31.5" y="10.8" font-size="6.6" fill="#151515" font-weight="bold" letter-spacing="-0.3">2</text><rect x="63.7" y="6.7" width="10" height="10.3" rx="2" fill="#28b4ec" stroke="#f0a020" stroke-width="1.4"/><use href="#gspk" x="8.7" y="20.4"/><rect x="62.2" y="21.5" width="25.8" height="11.7" rx="1" fill="#6c6c74"/><text x="75.10000000000001" y="30.000000000000004" font-size="6.8" fill="#dadae4" text-anchor="middle" letter-spacing="-0.2">MENU</text><rect x="62.2" y="36.2" width="25.8" height="11.7" rx="1" fill="#0c8c12"/><text x="75.10000000000001" y="44.7" font-size="6.8" fill="#b0f4b0" text-anchor="middle" letter-spacing="-0.2">MUTE</text><rect x="62.2" y="51.2" width="25.8" height="11.7" rx="1" fill="#6c6c74"/><text x="75.10000000000001" y="59.7" font-size="6.8" fill="#dadae4" text-anchor="middle" >EQ</text><rect x="94.8" y="13.4" width="10.5" height="42.8" fill="url(#stripe)"/><rect x="121.3" y="24" width="8" height="28.8" fill="url(#stripe)"/><text x="106.2" y="16.6" font-size="6.2" fill="#e0e0e0" letter-spacing="-0.3">+10</text><text x="106.2" y="40.0" font-size="6.2" fill="#e0e0e0" letter-spacing="-0.3">-30</text><text x="106.2" y="58.3" font-size="6.2" fill="#e0e0e0" letter-spacing="-0.3">-60</text><circle cx="125.3" cy="11.6" r="3.9" fill="#3cc42a"/><polygon points="4.5,67.3 83.6,67.3 90.6,80.5 4.5,80.5" fill="#f4a700"/><text x="7.6" y="76.8" font-size="10.2" fill="#141414" font-weight="bold" letter-spacing="-0.4">VI 6.2-04</text><rect x="4.5" y="80.5" width="133" height="14.6" fill="#1e1e1e" stroke="#e8a41e"/><text x="8.3" y="90.2" font-size="8.6" fill="#c9a450" font-weight="bold" >1</text><rect x="116" y="83.6" width="9" height="8.4" fill="#404044"/><rect x="127" y="83.6" width="8.2" height="8.4" fill="#5c5c64"/><path d="M118 87.8h5M129 87.8h4.2M131.1 85.7v4.2" stroke="#777" stroke-width="1"/><rect x="141.1" y="5.1" width="14.2" height="52.6" fill="#242424" stroke="#f2c260"/><rect x="142.6" y="6.3999999999999995" width="11.2" height="12" fill="#0c8a14"/><path d="M145.0 12.2 L147.2 14.6 L151.6 9.6" stroke="#f0fff0" stroke-width="1.7" fill="none"/><rect x="142.6" y="19.1" width="11.2" height="12" fill="#1e8ee6"/><text x="148.2" y="28.4" font-size="9" fill="#f4fbff" font-weight="bold" text-anchor="middle" font-family="Liberation Serif">&#931;</text></g>
<g transform="translate(688.2,269)"><rect x="0" y="0" width="160" height="100" fill="#fdfdfd"/><rect x="4.5" y="4.5" width="133" height="76" fill="#242424" stroke="#e8a41e"/><polygon points="5,4.5 58,4.5 52,12 5,12" fill="#f4a700"/><text x="7" y="10.8" font-size="6.6" fill="#151515" font-weight="bold" letter-spacing="-0.3">D.1</text><text x="31.5" y="10.8" font-size="6.6" fill="#151515" font-weight="bold" letter-spacing="-0.3">4</text><rect x="63.7" y="6.7" width="10" height="10.3" rx="2" fill="#f5960a" stroke="#f0a020" stroke-width="1.4"/><use href="#gspk" x="8.7" y="20.4"/><rect x="62.2" y="21.5" width="25.8" height="11.7" rx="1" fill="#6c6c74"/><text x="75.10000000000001" y="30.000000000000004" font-size="6.8" fill="#dadae4" text-anchor="middle" letter-spacing="-0.2">MENU</text><rect x="62.2" y="36.2" width="25.8" height="11.7" rx="1" fill="#0c8c12"/><text x="75.10000000000001" y="44.7" font-size="6.8" fill="#b0f4b0" text-anchor="middle" letter-spacing="-0.2">MUTE</text><rect x="62.2" y="51.2" width="25.8" height="11.7" rx="1" fill="#6c6c74"/><text x="75.10000000000001" y="59.7" font-size="6.8" fill="#dadae4" text-anchor="middle" >EQ</text><rect x="94.8" y="13.4" width="10.5" height="42.8" fill="url(#stripe)"/><rect x="121.3" y="24" width="8" height="28.8" fill="url(#stripe)"/><text x="106.2" y="16.6" font-size="6.2" fill="#e0e0e0" letter-spacing="-0.3">+10</text><text x="106.2" y="40.0" font-size="6.2" fill="#e0e0e0" letter-spacing="-0.3">-30</text><text x="106.2" y="58.3" font-size="6.2" fill="#e0e0e0" letter-spacing="-0.3">-60</text><circle cx="125.3" cy="11.6" r="3.9" fill="#3cc42a"/><polygon points="4.5,67.3 83.6,67.3 90.6,80.5 4.5,80.5" fill="#f4a700"/><text x="7.6" y="76.8" font-size="10.2" fill="#141414" font-weight="bold" letter-spacing="-0.4">VI 6.2-04</text><rect x="4.5" y="80.5" width="133" height="14.6" fill="#1e1e1e" stroke="#e8a41e"/><text x="8.3" y="90.2" font-size="8.6" fill="#c9a450" font-weight="bold" >1</text><rect x="116" y="83.6" width="9" height="8.4" fill="#404044"/><rect x="127" y="83.6" width="8.2" height="8.4" fill="#5c5c64"/><path d="M118 87.8h5M129 87.8h4.2M131.1 85.7v4.2" stroke="#777" stroke-width="1"/><rect x="141.1" y="5.1" width="14.2" height="52.6" fill="#242424" stroke="#f2c260"/><rect x="142.6" y="6.3999999999999995" width="11.2" height="12" fill="#0c8a14"/><path d="M145.0 12.2 L147.2 14.6 L151.6 9.6" stroke="#f0fff0" stroke-width="1.7" fill="none"/><rect x="142.6" y="19.1" width="11.2" height="12" fill="#1e8ee6"/><text x="148.2" y="28.4" font-size="9" fill="#f4fbff" font-weight="bold" text-anchor="middle" font-family="Liberation Serif">&#931;</text></g>
<g transform="translate(853.4,269)"><rect x="0" y="0" width="160" height="100" fill="#fdfdfd"/><rect x="4.5" y="4.5" width="133" height="76" fill="#242424" stroke="#e8a41e"/><polygon points="5,4.5 58,4.5 52,12 5,12" fill="#f4a700"/><text x="7" y="10.8" font-size="6.6" fill="#151515" font-weight="bold" letter-spacing="-0.3">A.1</text><text x="31.5" y="10.8" font-size="6.6" fill="#151515" font-weight="bold" letter-spacing="-0.3">6</text><rect x="63.7" y="6.7" width="10" height="10.3" rx="2" fill="#9a0a9a" stroke="#f0a020" stroke-width="1.4"/><use href="#gspk" x="8.7" y="20.4"/><rect x="62.2" y="21.5" width="25.8" height="11.7" rx="1" fill="#6c6c74"/><text x="75.10000000000001" y="30.000000000000004" font-size="6.8" fill="#dadae4" text-anchor="middle" letter-spacing="-0.2">MENU</text><rect x="62.2" y="36.2" width="25.8" height="11.7" rx="1" fill="#0c8c12"/><text x="75.10000000000001" y="44.7" font-size="6.8" fill="#b0f4b0" text-anchor="middle" letter-spacing="-0.2">MUTE</text><rect x="62.2" y="51.2" width="25.8" height="11.7" rx="1" fill="#6c6c74"/><text x="75.10000000000001" y="59.7" font-size="6.8" fill="#dadae4" text-anchor="middle" >EQ</text><rect x="94.8" y="13.4" width="10.5" height="42.8" fill="url(#stripe)"/><rect x="121.3" y="24" width="8" height="28.8" fill="url(#stripe)"/><text x="106.2" y="16.6" font-size="6.2" fill="#e0e0e0" letter-spacing="-0.3">+10</text><text x="106.2" y="40.0" font-size="6.2" fill="#e0e0e0" letter-spacing="-0.3">-30</text><text x="106.2" y="58.3" font-size="6.2" fill="#e0e0e0" letter-spacing="-0.3">-60</text><circle cx="125.3" cy="11.6" r="3.9" fill="#3cc42a"/><polygon points="4.5,67.3 83.6,67.3 90.6,80.5 4.5,80.5" fill="#f4a700"/><text x="7.6" y="76.8" font-size="10.2" fill="#141414" font-weight="bold" letter-spacing="-0.4">VI 6.2-07</text><rect x="4.5" y="80.5" width="133" height="14.6" fill="#1e1e1e" stroke="#e8a41e"/><text x="8.3" y="90.2" font-size="8.6" fill="#c9a450" font-weight="bold" >1</text><rect x="116" y="83.6" width="9" height="8.4" fill="#404044"/><rect x="127" y="83.6" width="8.2" height="8.4" fill="#5c5c64"/><path d="M118 87.8h5M129 87.8h4.2M131.1 85.7v4.2" stroke="#777" stroke-width="1"/><rect x="141.1" y="5.1" width="14.2" height="52.6" fill="#242424" stroke="#f2c260"/><rect x="142.6" y="6.3999999999999995" width="11.2" height="12" fill="#0c8a14"/><path d="M145.0 12.2 L147.2 14.6 L151.6 9.6" stroke="#f0fff0" stroke-width="1.7" fill="none"/><rect x="142.6" y="19.1" width="11.2" height="12" fill="#1e8ee6"/><text x="148.2" y="28.4" font-size="9" fill="#f4fbff" font-weight="bold" text-anchor="middle" font-family="Liberation Serif">&#931;</text></g>
<g transform="translate(1018.6,269)"><rect x="0" y="0" width="160" height="100" fill="#fdfdfd"/><rect x="4.5" y="4.5" width="133" height="76" fill="#242424" stroke="#e8a41e"/><polygon points="5,4.5 58,4.5 52,12 5,12" fill="#f4a700"/><text x="7" y="10.8" font-size="6.6" fill="#151515" font-weight="bold" letter-spacing="-0.3">B.1</text><text x="31.5" y="10.8" font-size="6.6" fill="#151515" font-weight="bold" letter-spacing="-0.3">8</text><rect x="63.7" y="6.7" width="10" height="10.3" rx="2" fill="#0a7a0a" stroke="#f0a020" stroke-width="1.4"/><use href="#gspk" x="8.7" y="20.4"/><rect x="62.2" y="21.5" width="25.8" height="11.7" rx="1" fill="#6c6c74"/><text x="75.10000000000001" y="30.000000000000004" font-size="6.8" fill="#dadae4" text-anchor="middle" letter-spacing="-0.2">MENU</text><rect x="62.2" y="36.2" width="25.8" height="11.7" rx="1" fill="#0c8c12"/><text x="75.10000000000001" y="44.7" font-size="6.8" fill="#b0f4b0" text-anchor="middle" letter-spacing="-0.2">MUTE</text><rect x="62.2" y="51.2" width="25.8" height="11.7" rx="1" fill="#6c6c74"/><text x="75.10000000000001" y="59.7" font-size="6.8" fill="#dadae4" text-anchor="middle" >EQ</text><rect x="94.8" y="13.4" width="10.5" height="42.8" fill="url(#stripe)"/><rect x="121.3" y="24" width="8" height="28.8" fill="url(#stripe)"/><text x="106.2" y="16.6" font-size="6.2" fill="#e0e0e0" letter-spacing="-0.3">+10</text><text x="106.2" y="40.0" font-size="6.2" fill="#e0e0e0" letter-spacing="-0.3">-30</text><text x="106.2" y="58.3" font-size="6.2" fill="#e0e0e0" letter-spacing="-0.3">-60</text><circle cx="125.3" cy="11.6" r="3.9" fill="#3cc42a"/><polygon points="4.5,67.3 83.6,67.3 90.6,80.5 4.5,80.5" fill="#f4a700"/><text x="7.6" y="76.8" font-size="10.2" fill="#141414" font-weight="bold" letter-spacing="-0.4">VI 6.2-07</text><rect x="4.5" y="80.5" width="133" height="14.6" fill="#1e1e1e" stroke="#e8a41e"/><text x="8.3" y="90.2" font-size="8.6" fill="#c9a450" font-weight="bold" >1</text><rect x="116" y="83.6" width="9" height="8.4" fill="#404044"/><rect x="127" y="83.6" width="8.2" height="8.4" fill="#5c5c64"/><path d="M118 87.8h5M129 87.8h4.2M131.1 85.7v4.2" stroke="#777" stroke-width="1"/><rect x="141.1" y="5.1" width="14.2" height="52.6" fill="#242424" stroke="#f2c260"/><rect x="142.6" y="6.3999999999999995" width="11.2" height="12" fill="#0c8a14"/><path d="M145.0 12.2 L147.2 14.6 L151.6 9.6" stroke="#f0fff0" stroke-width="1.7" fill="none"/><rect x="142.6" y="19.1" width="11.2" height="12" fill="#1e8ee6"/><text x="148.2" y="28.4" font-size="9" fill="#f4fbff" font-weight="bold" text-anchor="middle" font-family="Liberation Serif">&#931;</text></g>
<g transform="translate(1183.8,269)"><rect x="0" y="0" width="160" height="100" fill="#fdfdfd"/><rect x="4.5" y="4.5" width="133" height="76" fill="#242424" stroke="#e8a41e"/><polygon points="5,4.5 58,4.5 52,12 5,12" fill="#f4a700"/><text x="7" y="10.8" font-size="6.6" fill="#151515" font-weight="bold" letter-spacing="-0.3">C.1</text><text x="31.5" y="10.8" font-size="6.6" fill="#151515" font-weight="bold" letter-spacing="-0.3">10</text><rect x="63.7" y="6.7" width="10" height="10.3" rx="2" fill="#28b4ec" stroke="#f0a020" stroke-width="1.4"/><use href="#gspk" x="8.7" y="20.4"/><rect x="62.2" y="21.5" width="25.8" height="11.7" rx="1" fill="#6c6c74"/><text x="75.10000000000001" y="30.000000000000004" font-size="6.8" fill="#dadae4" text-anchor="middle" letter-spacing="-0.2">MENU</text><rect x="62.2" y="36.2" width="25.8" height="11.7" rx="1" fill="#0c8c12"/><text x="75.10000000000001" y="44.7" font-size="6.8" fill="#b0f4b0" text-anchor="middle" letter-spacing="-0.2">MUTE</text><rect x="62.2" y="51.2" width="25.8" height="11.7" rx="1" fill="#6c6c74"/><text x="75.10000000000001" y="59.7" font-size="6.8" fill="#dadae4" text-anchor="middle" >EQ</text><rect x="94.8" y="13.4" width="10.5" height="42.8" fill="url(#stripe)"/><rect x="121.3" y="24" width="8" height="28.8" fill="url(#stripe)"/><text x="106.2" y="16.6" font-size="6.2" fill="#e0e0e0" letter-spacing="-0.3">+10</text><text x="106.2" y="40.0" font-size="6.2" fill="#e0e0e0" letter-spacing="-0.3">-30</text><text x="106.2" y="58.3" font-size="6.2" fill="#e0e0e0" letter-spacing="-0.3">-60</text><circle cx="125.3" cy="11.6" r="3.9" fill="#3cc42a"/><polygon points="4.5,67.3 83.6,67.3 90.6,80.5 4.5,80.5" fill="#f4a700"/><text x="7.6" y="76.8" font-size="10.2" fill="#141414" font-weight="bold" letter-spacing="-0.4">VI 6.2-07</text><rect x="4.5" y="80.5" width="133" height="14.6" fill="#1e1e1e" stroke="#e8a41e"/><text x="8.3" y="90.2" font-size="8.6" fill="#c9a450" font-weight="bold" >1</text><rect x="116" y="83.6" width="9" height="8.4" fill="#404044"/><rect x="127" y="83.6" width="8.2" height="8.4" fill="#5c5c64"/><path d="M118 87.8h5M129 87.8h4.2M131.1 85.7v4.2" stroke="#777" stroke-width="1"/><rect x="141.1" y="5.1" width="14.2" height="52.6" fill="#242424" stroke="#f2c260"/><rect x="142.6" y="6.3999999999999995" width="11.2" height="12" fill="#0c8a14"/><path d="M145.0 12.2 L147.2 14.6 L151.6 9.6" stroke="#f0fff0" stroke-width="1.7" fill="none"/><rect x="142.6" y="19.1" width="11.2" height="12" fill="#1e8ee6"/><text x="148.2" y="28.4" font-size="9" fill="#f4fbff" font-weight="bold" text-anchor="middle" font-family="Liberation Serif">&#931;</text></g>
<g transform="translate(1349.0,269)"><rect x="0" y="0" width="160" height="100" fill="#fdfdfd"/><rect x="4.5" y="4.5" width="133" height="76" fill="#242424" stroke="#e8a41e"/><polygon points="5,4.5 58,4.5 52,12 5,12" fill="#f4a700"/><text x="7" y="10.8" font-size="6.6" fill="#151515" font-weight="bold" letter-spacing="-0.3">D.1</text><text x="31.5" y="10.8" font-size="6.6" fill="#151515" font-weight="bold" letter-spacing="-0.3">12</text><rect x="63.7" y="6.7" width="10" height="10.3" rx="2" fill="#f5960a" stroke="#f0a020" stroke-width="1.4"/><use href="#gspk" x="8.7" y="20.4"/><rect x="62.2" y="21.5" width="25.8" height="11.7" rx="1" fill="#6c6c74"/><text x="75.10000000000001" y="30.000000000000004" font-size="6.8" fill="#dadae4" text-anchor="middle" letter-spacing="-0.2">MENU</text><rect x="62.2" y="36.2" width="25.8" height="11.7" rx="1" fill="#0c8c12"/><text x="75.10000000000001" y="44.7" font-size="6.8" fill="#b0f4b0" text-anchor="middle" letter-spacing="-0.2">MUTE</text><rect x="62.2" y="51.2" width="25.8" height="11.7" rx="1" fill="#6c6c74"/><text x="75.10000000000001" y="59.7" font-size="6.8" fill="#dadae4" text-anchor="middle" >EQ</text><rect x="94.8" y="13.4" width="10.5" height="42.8" fill="url(#stripe)"/><rect x="121.3" y="24" width="8" height="28.8" fill="url(#stripe)"/><text x="106.2" y="16.6" font-size="6.2" fill="#e0e0e0" letter-spacing="-0.3">+10</text><text x="106.2" y="40.0" font-size="6.2" fill="#e0e0e0" letter-spacing="-0.3">-30</text><text x="106.2" y="58.3" font-size="6.2" fill="#e0e0e0" letter-spacing="-0.3">-60</text><circle cx="125.3" cy="11.6" r="3.9" fill="#3cc42a"/><polygon points="4.5,67.3 83.6,67.3 90.6,80.5 4.5,80.5" fill="#f4a700"/><text x="7.6" y="76.8" font-size="10.2" fill="#141414" font-weight="bold" letter-spacing="-0.4">VI 6.2-07</text><rect x="4.5" y="80.5" width="133" height="14.6" fill="#1e1e1e" stroke="#e8a41e"/><text x="8.3" y="90.2" font-size="8.6" fill="#c9a450" font-weight="bold" >1</text><rect x="116" y="83.6" width="9" height="8.4" fill="#404044"/><rect x="127" y="83.6" width="8.2" height="8.4" fill="#5c5c64"/><path d="M118 87.8h5M129 87.8h4.2M131.1 85.7v4.2" stroke="#777" stroke-width="1"/><rect x="141.1" y="5.1" width="14.2" height="52.6" fill="#242424" stroke="#f2c260"/><rect x="142.6" y="6.3999999999999995" width="11.2" height="12" fill="#0c8a14"/><path d="M145.0 12.2 L147.2 14.6 L151.6 9.6" stroke="#f0fff0" stroke-width="1.7" fill="none"/><rect x="142.6" y="19.1" width="11.2" height="12" fill="#1e8ee6"/><text x="148.2" y="28.4" font-size="9" fill="#f4fbff" font-weight="bold" text-anchor="middle" font-family="Liberation Serif">&#931;</text></g>
</svg>
</body></html>
